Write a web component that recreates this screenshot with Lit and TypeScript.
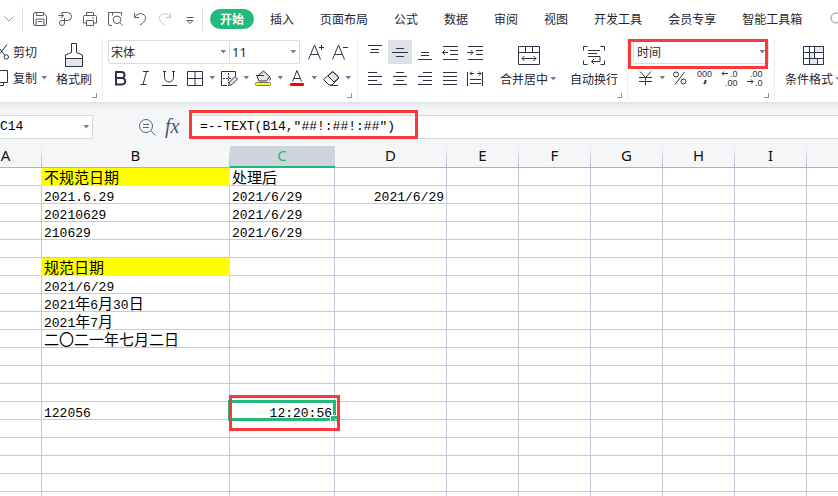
import { LitElement, html, svg, css, nothing } from "lit";
import type { TemplateResult } from "lit";
import { customElement, state } from "lit/decorators.js";
import { classMap } from "lit/directives/class-map.js";

type Cell = { text: string; head?: boolean; right?: boolean };

const icon = (body: TemplateResult, w = 24, h = 24) =>
  html`<svg class="ico" width=${w} height=${h} viewBox="0 0 ${w} ${h}" aria-hidden="true">${body}</svg>`;

const arrow = html`<svg class="arrow" width="10" height="6" viewBox="0 0 10 6" aria-hidden="true"><path d="M2.5 1h5.6L5.3 4.4z" /></svg>`;

/* Horizontal strokes given as [x1, x2, y]. */
const strokes = (list: number[][]) => svg`${list.map(([a, b, y]) => svg`<path d="M${a} ${y}H${b}" />`)}`;

const quick: { label: string; faded?: boolean; art: TemplateResult }[] = [
  { label: "保存", art: svg`<path d="M5.500 7q0-1.500 1.500-1.500h8L18.500 9v8q0 1.500-1.500 1.500H7q-1.500 0-1.500-1.500zM8.500 5.500v3h7v-3M8 18v-6h8v6M10 14.500h4" />` },
  { label: "输出", art: svg`<path d="M5.500 8.500h5M8.500 5.500h6a4 4 0 0 1 0 8h-3.500M8 6l2.500 2.500L8 11M11.500 11v5a2.500 2.500 0 1 1-2.500-2.500h3" />` },
  { label: "打印", art: svg`<path d="M8.500 8.500v-3h7v3M8.500 16h-3V9.500q0-1 1-1h11q1 0 1 1V16h-3M8.500 13.500h7v5h-7zM14 11h2" />` },
  { label: "打印预览", art: svg`<path d="M9 18.500H7q-1.500 0-1.500-1.500V5.500h13v3M9.500 5.500v3M14 9a3.800 3.800 0 1 0 0 7.600A3.800 3.800 0 0 0 14 9zM16.800 15.700l3 3" />` },
  { label: "撤销", art: svg`<path d="M6.500 6v4.500H11M6.800 10.200c3-5.500 11-4.200 10.700 1C17.300 14.500 15 16 12 18" />` },
  { label: "恢复", faded: true, art: svg`<path d="M17.500 6v4.500H13M17.200 10.200c-3-5.500-11-4.200-10.700 1C6.700 14.500 9 16 12 18" />` },
  { label: "自定义快速访问工具栏", art: svg`<path d="M8.500 10.500h7M9 13.500l3 3 3-3z" />` },
];

const tabs = ["开始", "插入", "页面布局", "公式", "数据", "审阅", "视图", "开发工具", "会员专享", "智能工具箱"];

const alignTop: [string, TemplateResult][] = [
  ["顶端对齐", strokes([[5, 19, 5.5], [8, 16, 9.5], [7, 16, 12.5]])],
  ["垂直居中", strokes([[8, 16, 8.5], [4, 20, 12.5], [8, 16, 16.5]])],
  ["底端对齐", strokes([[8, 16, 12.5], [8, 16, 15.5], [5, 19, 19.5]])],
  ["减少缩进", svg`${strokes([[5, 20, 6.5], [12, 20, 10.5], [12, 20, 14.5], [5, 20, 19.5], [4, 10, 12.5]])}<path d="M7 10l-2.500 2.500L7 15" />`],
  ["增加缩进", svg`${strokes([[5, 20, 6.5], [13, 20, 10.5], [13, 20, 14.5], [5, 20, 19.5], [4, 10, 12.5]])}<path d="M7.500 10l2.500 2.500L7.500 15" />`],
];
const alignRow: [string, TemplateResult][] = [
  ["左对齐", strokes([[5, 14, 6.5], [5, 19, 10.5], [5, 14, 14.5], [5, 19, 18.5]])],
  ["水平居中", strokes([[8, 16, 6.5], [5, 19, 10.5], [8, 16, 14.5], [5, 19, 18.5]])],
  ["右对齐", strokes([[10, 19, 6.5], [5, 19, 10.5], [10, 19, 14.5], [5, 19, 18.5]])],
  ["两端对齐", strokes([[5, 19, 6.5], [5, 19, 10.5], [5, 19, 14.5], [5, 19, 18.5]])],
  ["分散对齐", svg`${strokes([[7, 18, 13.5], [7, 18, 17.5], [7, 11, 7.5], [14, 18, 7.5]])}<path d="M4.500 6v14M19.500 6v14M9 5.500l-2 2 2 2M16 5.500l2 2-2 2" />`],
];

const columns = ["A", "B", "C", "D", "E", "F", "G", "H", "I", ""];

const cells: Record<string, Cell> = {
  B1: { text: "不规范日期", head: true },
  C1: { text: "处理后" },
  B2: { text: "2021.6.29" },
  C2: { text: "2021/6/29" },
  D2: { text: "2021/6/29", right: true },
  B3: { text: "20210629" },
  C3: { text: "2021/6/29" },
  B4: { text: "210629" },
  C4: { text: "2021/6/29" },
  B6: { text: "规范日期", head: true },
  B7: { text: "2021/6/29" },
  B8: { text: "2021年6月30日" },
  B9: { text: "2021年7月" },
  B10: { text: "二〇二一年七月二日" },
  B14: { text: "122056" },
  C14: { text: "12:20:56", right: true },
};

@customElement("app-root")
export class AppRoot extends LitElement {
  @state() private active = "开始";

  static styles = css`
    :host {
      display: flex;
      flex-direction: column;
      height: 100vh;
      overflow: hidden;
      background: #fff;
      color: #1f2633;
      font: 12px/18px "Noto Sans CJK SC", sans-serif;
    }
    * { box-sizing: border-box; }
    button, select, input { font: inherit; color: inherit; margin: 0; padding: 0; border: 0; background: none; }
    button { display: flex; align-items: center; flex: none; white-space: nowrap; }
    svg { display: block; flex: none; }
    .ico { fill: none; stroke: #2b3245; stroke-width: 1; overflow: visible; }
    .ico text { stroke: none; fill: #2b3245; font-family: "Liberation Sans", sans-serif; }
    .ico .soft { fill: #e3e5e9; }
    .ico .heavy { stroke-width: 2; }
    .arrow { fill: #6f7d95; }

    .top { display: flex; align-items: center; height: 38px; flex: none; overflow: hidden; }
    .more { width: 22px; justify-content: center; padding-right: 4px; }
    .more .ico { stroke: #8d94a0; }
    .quick { display: flex; padding-left: 4px; border-left: 1px solid #dedfe2; border-right: 1px solid #dedfe2; height: 24px; }
    .quick button { width: 25px; justify-content: center; }
    .quick .ico { stroke: #555c6b; }
    .quick .faded .ico { stroke: #c4c8ce; }
    .tabs { display: flex; align-items: center; gap: 26px; padding-left: 17px; }
    .tab { height: 20px; }
    .tab.on { margin: 0 -10px; padding: 0 10px; border-radius: 10px; background: #21ba7c; color: #fff; font-weight: 700; }
    .find { margin-left: 27px; }
    .find .ico { stroke: #8791a3; }

    .ribbon { display: flex; height: 64px; flex: none; overflow: hidden; }
    .group { position: relative; display: flex; flex: none; height: 62px; padding: 2px 5px 0; border-right: 1px solid #ebecef; }
    .group.clip { padding: 2px 6px 0 0; }
    .group.last { border: 0; padding-left: 10px; }
    .group.font { padding-right: 4px; }
    .rows { display: flex; flex-direction: column; gap: 2px; }
    .line { display: flex; height: 24px; align-items: center; }
    .boxes { display: flex; width: 195px; }
    .label { width: 52px; height: 24px; gap: 2px; }
    .tool { width: 25px; height: 24px; }
    .tool.on { background: #dde2e8; width: 24px; margin-right: 1px; }
    .split { width: 34px; height: 24px; }
    .big { flex-direction: column; height: 50px; gap: 2px; padding-top: 2px; }
    .big span { display: flex; align-items: center; }
    .big.brush { width: 44px; }
    .big.merge { width: 64px; margin-left: 9px; }
    .big.wrap { width: 56px; margin-left: 5px; }
    .big.cond { width: 58px; }
    .corner { position: absolute; right: 5px; bottom: 2px; width: 5px; height: 5px; border: solid #8a94a6; border-width: 0 1px 1px 0; }

    .field { position: relative; display: flex; align-items: center; height: 24px; border: 1px solid #d9dbdf; border-radius: 2px; background: #fff; }
    .field select { appearance: none; flex: 1; min-width: 0; height: 22px; padding-left: 2px; outline: 0; }
    .field .arrow { position: absolute; right: 1px; pointer-events: none; }
    .name { width: 122px; }
    .size { width: 71px; margin-left: -1px; }
    .size select { font: 13px/20px "Noto Sans", sans-serif; }
    .format { width: 136px; }
    .format select { padding-left: 3px; }
    .mark { position: absolute; border: 3px solid #fb3838; pointer-events: none; z-index: 2; }
    .format .mark { inset: -2px 0 -6px -6px; }

    .bar { display: flex; align-items: center; flex: none; height: 44px; padding-top: 3px; border-top: 2px solid #e4e5e7; background: linear-gradient(#ecedef, #f5f6f8 6px); }
    .cellname { width: 93px; border-left: 0; border-radius: 0 2px 2px 0; }
    .cellname input, .formula input { width: 100%; height: 22px; outline: 0; color: #000; font: 13px/20px "Liberation Mono", monospace; }
    .tools { display: flex; gap: 1px; padding: 0 5px 0 42px; }
    .tools .ico { stroke: #59637a; }
    .tools .ico text { fill: #4b556a; font: italic 20px "Liberation Serif", serif; }
    .formula { position: relative; flex: 1; height: 24px; border: solid #d3d6dc; border-width: 1px 0; background: #fff; padding-left: 11px; }
    .formula .mark { left: 0; top: -6px; bottom: -1px; width: 229px; }

    .sheet { flex: 1; min-height: 0; overflow: hidden; }
    table { width: 100%; table-layout: fixed; border-collapse: separate; border-spacing: 0; }
    .cA { width: 42px; } .cB { width: 188px; } .cC { width: 105px; } .cD { width: 112px; }
    .cE, .cF, .cG, .cH, .cI { width: 72px; }
    th { height: 22px; padding: 0 1px 2px 0; background: #f5f6f8 linear-gradient(#f5f6f8, #a9b3c8) right / 1px 100% no-repeat; border-bottom: 1px solid #a9b3c8; color: #111; font: 15px/19px "Noto Sans", sans-serif; }
    th.cA { padding-right: 31px; }
    th.on { background: #d0d4dc; color: #21ba7c; border-color: #21ba7c; box-shadow: inset 0 -1px #21ba7c; }
    th:last-child { background-image: none; }
    td { position: relative; height: 18px; padding: 0 2px; border: solid #c3cada; border-width: 0 1px 1px 0; color: #000; font-size: 15px; line-height: 17px; white-space: nowrap; }
    td:last-child { border-right: 0; }
    .value { height: 17px; }
    td.right { text-align: right; }
    td.head { background: #ff0; border-color: #ff0; box-shadow: -1px 0 #ff0; }
    .num { font: 13px/17px "Liberation Mono", monospace; }
    .cursor { position: absolute; inset: -2px; border: 3px solid #21ba7c; pointer-events: none; }
    .cursor::after { content: ""; position: absolute; right: -4px; bottom: -3px; width: 6px; height: 5px; background: #21ba7c; border: solid #fff; border-width: 1px 0 0 1px; }
    td .mark { inset: -7px -6px -12px -1px; }
  `;

  private tool(label: string, art: TemplateResult, on = false) {
    return html`<button class=${classMap({ tool: true, on })} aria-label=${label}>${icon(art)}</button>`;
  }

  private split(label: string, art: TemplateResult) {
    return html`<button class="split" aria-label=${label}>${icon(art)}${arrow}</button>`;
  }

  private select(cls: string, label: string, value: string, extra: unknown = nothing) {
    return html`<div class="field ${cls}"><select aria-label=${label}><option>${value}</option></select>${arrow}${extra}</div>`;
  }

  private cell(col: string, row: number) {
    const c = cells[col + row];
    if (!c) return html`<td></td>`;
    const runs = c.text.split(/([\x21-\x7e]+)/).filter(Boolean);
    return html`<td class=${classMap({ head: !!c.head, right: !!c.right })}>
      <div class="value">${runs.map((r) => (/^[\x21-\x7e]/.test(r) ? html`<span class="num">${r}</span>` : r))}</div>
      ${col + row === "C14" ? html`<i class="cursor"></i><i class="mark"></i>` : nothing}
    </td>`;
  }

  render() {
    return html`
      <header class="top">
        <button class="more" aria-label="展开">${icon(svg`<path d="M.5.500l4.500 4.500 4.500-4.500" />`, 10, 6)}</button>
        <div class="quick">
          ${quick.map((q) => html`<button class=${classMap({ faded: !!q.faded })} aria-label=${q.label}>${icon(q.art)}</button>`)}
        </div>
        <nav class="tabs">
          ${tabs.map((t) => html`<button class=${classMap({ tab: true, on: t === this.active })} @click=${() => (this.active = t)}>${t}</button>`)}
        </nav>
        <button class="find" aria-label="查找">${icon(svg`<circle cx="7" cy="6" r="5" /><path d="M11 10l3 3" />`, 14, 14)}</button>
      </header>

      <section class="ribbon">
        <div class="group clip">
          <div class="rows">
            <button class="label">${icon(svg`<path d="M0 13.500L7 4.500M0 9l4.500 6" /><circle cx="6.300" cy="17" r="2.200" />`, 11, 24)}剪切</button>
            <button class="label">${icon(svg`<path d="M0 4.500h7.500v12H0M0 19.500h3.500v-3" />`, 11, 24)}复制${arrow}</button>
          </div>
          <button class="big brush">
            ${icon(svg`<path class="soft" d="M3.500 16.500h17v8h-17z" /><path d="M9.500 1.500h5v9l6 2.500v11.500h-17V13l6-2.500z" />`, 24, 26)}
            <span>格式刷</span>
          </button>
          <i class="corner"></i>
        </div>

        <div class="group font">
          <div class="rows">
            <div class="line">
              <div class="boxes">${this.select("name", "字体", "宋体")}${this.select("size", "字号", "11")}</div>
              ${this.tool("增大字号", svg`<path d="M5.500 19.500L11.500 5l6 14.500M7.500 14.500h8M16 7.500h5M18.500 5v5" />`)}
              ${this.tool("减小字号", svg`<path d="M4.500 19.500L10.500 5l6 14.500M6.500 14.500h8M15 7.500h5" />`)}
            </div>
            <div class="line">
              ${this.tool("加粗", svg`<path class="heavy" d="M8 6h5.500a3 3 0 0 1 0 6H8zM8 12h6a3.200 3.200 0 0 1 0 6.500H8z" />`)}
              ${this.tool("倾斜", svg`<path d="M10 5.500h6M7.500 18.500h6M13.500 5.500l-3.500 13" />`)}
              ${this.tool("下划线", svg`<path d="M5 5.500h3M14 5.500h3M6.500 5.500v6a4.500 4.500 0 0 0 9 0v-6M4 19.500h15" />`)}
              ${this.split("边框", svg`<path d="M4.500 5.500h15v14h-15zM12 5.500v14M4.500 12.500h15" />`)}
              ${this.split("绘图边框", svg`<path d="M10 19.500H4.500v-14h14v5" /><path stroke-dasharray="2 1" d="M6 12.500h8M11.500 7v10" /><path class="soft" d="M11.500 19.500l1-3.500 5.500-5.500 2.500 2.500L15 18.500z" />`)}
              ${this.split("填充颜色", svg`<path class="soft" d="M6 10.500l6.500-5.500 6 5.500-3 4.500H8z" /><path d="M5 9.500h8M18.500 10.500q2 3 0 4" /><rect x="4.500" y="16.500" width="15" height="3" rx="1" fill="#ff0" stroke="#777" />`)}
              ${this.split("字体颜色", svg`<path d="M7.500 15.500l4.500-11 4.500 11M9 12.500h6" /><rect x="5" y="17" width="14" height="3" rx="1" fill="#f00" stroke="none" />`)}
              ${this.split("清除", svg`<path class="soft" d="M9 10l5-4.500 6 6-5 4.500z" /><path d="M4.500 13.500L13.500 5.500l6.500 6.500-7 7h-3zM9 10l6 6M11 19.500h8" />`)}
            </div>
          </div>
          <i class="corner"></i>
        </div>

        <div class="group">
          <div class="rows">
            <div class="line">${alignTop.map(([l, a], i) => this.tool(l, a, i === 1))}</div>
            <div class="line">${alignRow.map(([l, a]) => this.tool(l, a))}</div>
          </div>
          <button class="big merge">
            ${icon(svg`<path d="M1.500 4.500h21v18h-21zM1.500 10.500h21M8.500 4.500v6M15.500 4.500v6M5 16.500h14M7.500 14L5 16.500 7.500 19M16.500 14l2.500 2.500-2.500 2.500" />`, 24, 26)}
            <span>合并居中${arrow}</span>
          </button>
          <button class="big wrap">
            ${icon(svg`<path d="M5.500 4.500h-4v4M18.500 4.500h4v4M5.500 22.500h-4v-4M18.500 22.500h4v-4M6 8.500h12M6 11.500h9M6 14.500h12v5H9.500M12 17l-2.500 2.500L12 22" />`, 24, 26)}
            <span>自动换行</span>
          </button>
          <i class="corner"></i>
        </div>

        <div class="group">
          <div class="rows">
            ${this.select("format", "数字格式", "时间", html`<i class="mark"></i>`)}
            <div class="line">
              ${this.split("货币", svg`<path d="M7 5.500l5.500 6 5.500-6M6 11.500h13M6 15.500h13M12.500 11.500v8" />`)}
              ${this.tool("百分比", svg`<path d="M17.500 6L8 18.500" /><circle cx="9" cy="8.500" r="2.500" /><circle cx="16.500" cy="15.500" r="2.500" />`)}
              ${this.tool("千位分隔", svg`<text x="5" y="11" font-size="9">000</text><path class="heavy" d="M13.500 14v2l-1.500 2" />`)}
              ${this.tool("增加小数位", svg`<text x="13" y="11" font-size="9">.0</text><text x="8" y="20" font-size="9">.00</text><path d="M5 7.500h6M7 5.500l-2 2 2 2" />`)}
              ${this.tool("减少小数位", svg`<text x="8" y="11" font-size="9">.00</text><text x="13" y="20" font-size="9">.0</text><path d="M5 15.500h6M9 13.500l2 2-2 2" />`)}
            </div>
          </div>
          <i class="corner"></i>
        </div>

        <div class="group last">
          <button class="big cond">
            ${icon(svg`<path class="soft" d="M7.500 10.500h5v6h-5zM7.500 16.500h8v6h-8zM12.500 4.500h9v6h-9z" /><path d="M1.500 4.500h20v18h-20zM1.500 10.500h20M1.500 16.500h20M7.500 4.500v18M12.500 4.500v12M15.500 16.500v6" />`, 24, 26)}
            <span>条件格式${arrow}</span>
          </button>
        </div>
      </section>

      <section class="bar">
        <div class="field cellname"><input aria-label="名称框" value="C14" />${arrow}</div>
        <div class="tools">
          <button aria-label="浏览公式">${icon(svg`<circle cx="11" cy="11" r="6.500" /><path d="M15.500 15.500l5 5M8 9.500h6M8 12.500h6" />`)}</button>
          <button aria-label="插入函数">${icon(svg`<text x="5" y="18">fx</text>`)}</button>
        </div>
        <div class="formula"><input aria-label="公式" value='=--TEXT(B14,"##!:##!:##")' /><i class="mark"></i></div>
      </section>

      <main class="sheet">
        <table>
          <thead>
            <tr>${columns.map((c) => html`<th scope="col" class="c${c} ${c === "C" ? "on" : ""}">${c}</th>`)}</tr>
          </thead>
          <tbody>
            ${Array.from({ length: 19 }, (_, r) => html`<tr>${columns.map((c) => this.cell(c, r + 1))}</tr>`)}
          </tbody>
        </table>
      </main>
    `;
  }
}
